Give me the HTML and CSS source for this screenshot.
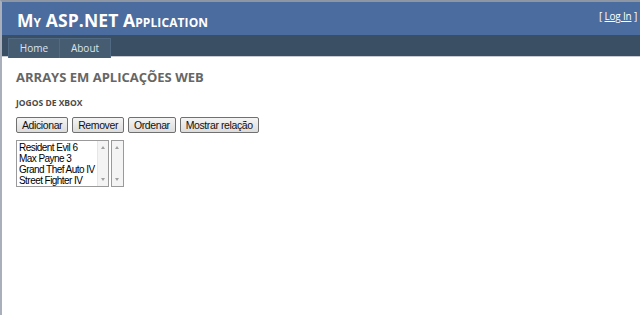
FILE: index.html
```html
<!DOCTYPE html>
<html lang="pt">
<head>
    <meta charset="UTF-8">
    <title>Arrays em aplicações web</title>
    <link rel="stylesheet" href="styles.css">
</head>
<body>
    <div class="page">
        <div class="header">
            <h1 class="title">My ASP.NET Application</h1>
            <div class="login">[ <a href="#">Log In</a> ]</div>
        </div>
        <div class="menu">
            <a class="menu-item" href="#">Home</a>
            <a class="menu-item" href="#">About</a>
        </div>
        <div class="main">
            <h2>Arrays em aplicações web</h2>
            <h3>Jogos de Xbox</h3>
            <div class="actions">
                <button class="btn">Adicionar</button>
                <button class="btn">Remover</button>
                <button class="btn">Ordenar</button>
                <button class="btn">Mostrar relação</button>
            </div>
            <div class="lists">
                <div class="listbox">
                    <div class="items">
                        <div>Resident Evil 6</div>
                        <div>Max Payne 3</div>
                        <div>Grand Thef Auto IV</div>
                        <div>Street Fighter IV</div>
                    </div>
                    <div class="scroll"><span class="up"></span><span class="down"></span></div>
                </div>
                <div class="listbox empty">
                    <div class="scroll"><span class="up"></span><span class="down"></span></div>
                </div>
            </div>
        </div>
    </div>
</body>
</html>
```
FILE: styles.css
```css
html, body {
    margin: 0;
    height: 100%;
}
body {
    background: #fff;
    font-family: "Liberation Sans", Arial, sans-serif;
}
.page {
    height: 100%;
    box-sizing: border-box;
    border-top: 2px solid #8e96a4;
    border-left: 2px solid #a9b0bc;
    background: #fff;
}
.header {
    background: #4b6c9e;
    height: 33px;
    display: flex;
    justify-content: space-between;
    align-items: flex-start;
}
.title {
    margin: 0;
    padding: 7px 0 0 15px;
    font-family: "Open Sans", "DejaVu Sans", sans-serif;
    font-variant: small-caps;
    font-weight: bold;
    font-size: 17.5px;
    line-height: 22px;
    color: #fff;
    letter-spacing: 0.1px;
}
.login {
    font-family: "Open Sans", sans-serif;
    font-size: 10px;
    color: #fff;
    padding: 7px 3px 0 0;
    letter-spacing: -0.2px;
}
.login a {
    color: #fff;
}
.menu {
    background: #3a4f63;
    height: 22px;
    padding: 3px 0 0 6px;
    box-sizing: border-box;
    display: flex;
    border-bottom: 1px solid #c8ccd2;
}
.menu-item {
    display: block;
    width: 50px;
    height: 19px;
    line-height: 19px;
    text-align: center;
    background: #465c71;
    border: 1px solid #4f6a82;
    border-bottom: none;
    margin-right: -1px;
    color: #dde4ec;
    font-family: "Open Sans", sans-serif;
    font-size: 10px;
    text-decoration: none;
}
.main {
    padding: 10px 14px;
}
h2 {
    margin: 0;
    font-family: "Open Sans", sans-serif;
    font-size: 13px;
    font-weight: bold;
    text-transform: uppercase;
    color: #666;
    line-height: 20px;
}
h3 {
    margin: 9px 0 0;
    font-family: "Open Sans", sans-serif;
    font-size: 8.5px;
    font-weight: bold;
    text-transform: uppercase;
    color: #4a4a4a;
    line-height: 14px;
}
.actions {
    display: flex;
    gap: 4px;
    margin-top: 7px;
}
.btn {
    height: 16px;
    padding: 0 5px;
    font-family: "Liberation Sans", Arial, sans-serif;
    font-size: 10.5px;
    letter-spacing: -0.4px;
    color: #111;
    background: linear-gradient(#f4f4f4, #dcdcdc);
    border: 1px solid #707070;
    border-radius: 2px;
    line-height: 14px;
}
.lists {
    display: flex;
    gap: 2px;
    margin-top: 7px;
}
.listbox {
    display: flex;
    height: 47px;
    box-sizing: border-box;
    border: 1px solid #9a9a9a;
    background: #fff;
}
.items {
    width: 80px;
    box-sizing: border-box;
    padding: 1px 0 0 2px;
    font-size: 10px;
    letter-spacing: -0.55px;
    line-height: 11px;
    color: #000;
    white-space: nowrap;
    overflow: hidden;
}
.scroll {
    width: 10px;
    border-left: 1px solid #e6e6e6;
    background: #f4f4f4;
    position: relative;
}
.up, .down {
    position: absolute;
    left: 3px;
    width: 0;
    height: 0;
    border-left: 2.5px solid transparent;
    border-right: 2.5px solid transparent;
}
.up {
    top: 5px;
    border-bottom: 3px solid #a0a0a0;
}
.down {
    bottom: 5px;
    border-top: 3px solid #a0a0a0;
}
.listbox.empty .scroll {
    width: 11px;
    border-left: none;
}
```
